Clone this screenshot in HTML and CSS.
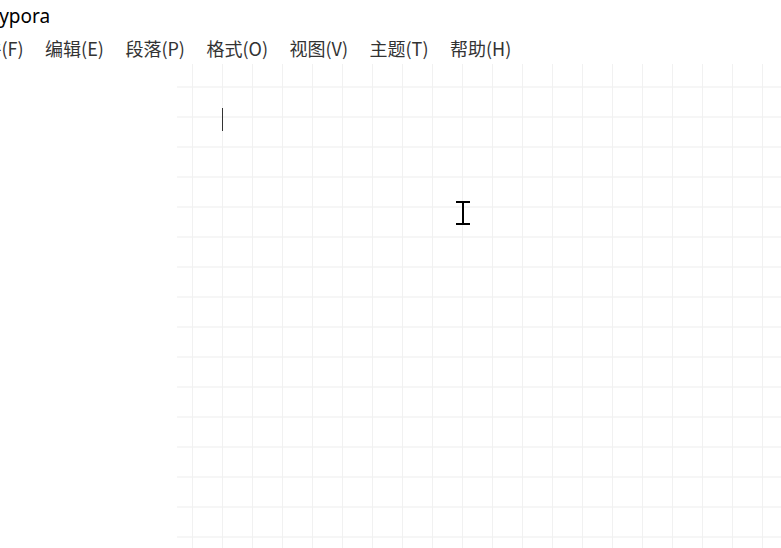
FILE: index.html
```html
<!DOCTYPE html>
<html lang="zh-CN">
<head>
<meta charset="utf-8">
<title>Typora</title>
<link rel="stylesheet" href="styles.css">
</head>
<body>
<div class="window">
  <div class="titlebar"><span class="title">Typora</span></div>
  <nav class="menubar">
    <span class="menu-item">文件(F)</span>
    <span class="menu-item">编辑(E)</span>
    <span class="menu-item">段落(P)</span>
    <span class="menu-item">格式(O)</span>
    <span class="menu-item">视图(V)</span>
    <span class="menu-item">主题(T)</span>
    <span class="menu-item">帮助(H)</span>
  </nav>
  <main class="workspace">
    <aside class="sidebar"></aside>
    <section class="editor">
      <div class="caret"></div>
    </section>
  </main>
  <svg class="mouse-cursor" width="16" height="26" viewBox="0 0 16 26">
    <rect x="0" y="0" width="14" height="2" fill="#000"/>
    <rect x="6" y="0" width="2" height="24" fill="#000"/>
    <rect x="0" y="22" width="14" height="2" fill="#000"/>
  </svg>
</div>
</body>
</html>
```
FILE: styles.css
```css
html, body {
  margin: 0;
  padding: 0;
  background: #ffffff;
  overflow: hidden;
}
.window {
  position: relative;
  width: 781px;
  height: 548px;
  display: flex;
  flex-direction: column;
  overflow: hidden;
}
.titlebar {
  height: 32px;
  display: flex;
  align-items: center;
  white-space: nowrap;
}
.title {
  font-family: "Noto Sans", "Open Sans", sans-serif;
  font-size: 19px;
  color: #000;
  margin-left: -11px;
}
.menubar {
  height: 32px;
  display: flex;
  align-items: center;
  gap: 21.5px;
  margin-left: -34.5px;
  white-space: nowrap;
}
.menu-item {
  font-family: "Noto Sans CJK SC", "Noto Sans", sans-serif;
  font-size: 18px;
  color: #333;
}
.workspace {
  flex: 1;
  display: flex;
}
.sidebar {
  width: 177px;
  flex: none;
}
.editor {
  flex: 1;
  padding: 44px 0 0 45px;
  background-color: #fff;
  background-image:
    linear-gradient(90deg, transparent 15px, #f1f1f1 15px, #f1f1f1 16px, transparent 16px),
    linear-gradient(180deg, transparent 22px, #f6f6f6 22px, #f6f6f6 24px, transparent 24px);
  background-size: 30px 30px;
}
.caret {
  width: 1px;
  height: 23px;
  background: #333;
}
.mouse-cursor {
  position: absolute;
  left: 456px;
  top: 201px;
}
```
